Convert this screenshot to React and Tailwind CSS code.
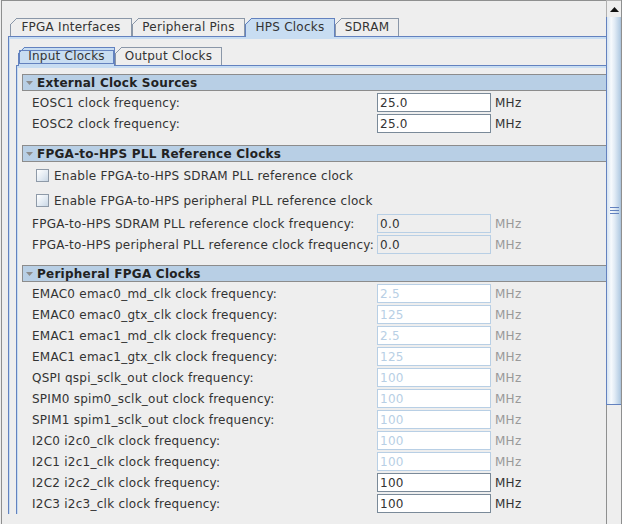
import React from "react";

const outerTabs = [
  { label: "FPGA Interfaces", w: "w-[122px]" },
  { label: "Peripheral Pins", w: "w-[113px]" },
  { label: "HPS Clocks", w: "w-[90px]", selected: true },
  { label: "SDRAM", w: "w-[64px]" },
];

const innerTabs = [
  { label: "Input Clocks", w: "w-[97px]", selected: true, focused: true },
  { label: "Output Clocks", w: "w-[107px]" },
];

const peripheral = [
  ["EMAC0 emac0_md_clk clock frequency:", "2.5", "off"],
  ["EMAC0 emac0_gtx_clk clock frequency:", "125", "off"],
  ["EMAC1 emac1_md_clk clock frequency:", "2.5", "off"],
  ["EMAC1 emac1_gtx_clk clock frequency:", "125", "off"],
  ["QSPI qspi_sclk_out clock frequency:", "100", "off"],
  ["SPIM0 spim0_sclk_out clock frequency:", "100", "off"],
  ["SPIM1 spim1_sclk_out clock frequency:", "100", "off"],
  ["I2C0 i2c0_clk clock frequency:", "100", "off"],
  ["I2C1 i2c1_clk clock frequency:", "100", "off"],
  ["I2C2 i2c2_clk clock frequency:", "100", "on"],
  ["I2C3 i2c3_clk clock frequency:", "100", "on"],
];

function Tab({ label, w, selected, focused }) {
  const line = selected ? "bg-[#6382bf]" : "bg-[#8a97a8]";
  return (
    <div className={`relative h-[19px] shrink-0 ${w} ${selected ? "" : "border-b border-[#6382bf]"}`}>
      {/* tab body with the cut corner */}
      <div
        className={`absolute inset-0 [clip-path:polygon(6px_0,100%_0,100%_100%,0_100%,0_6px)] ${
          selected ? "bg-[#c8ddf2]" : "bg-[#eeeeee]"
        }`}
      />
      <span className={`absolute left-[6px] right-0 top-0 h-px ${line}`} />
      <span className={`absolute bottom-0 right-0 top-0 w-px ${line}`} />
      <span className={`absolute bottom-0 left-0 top-[6px] w-px ${line}`} />
      <svg className="absolute left-0 top-0" width="7" height="7">
        <line x1="0.5" y1="6.5" x2="6.5" y2="0.5" stroke={selected ? "#6382bf" : "#8a97a8"} />
      </svg>
      {focused && <span className="absolute bottom-[2px] left-px right-px top-[3px] border border-[#6382bf]" />}
      <div className="relative flex h-full items-center justify-center whitespace-nowrap pb-px text-[#333]">
        {label}
      </div>
    </div>
  );
}

function TabRow({ tabs }) {
  return (
    <div className="flex h-[19px]">
      <div className="w-[2px] shrink-0 border-b border-[#6382bf]" />
      {tabs.map((t) => (
        <Tab key={t.label} {...t} />
      ))}
      <div className="flex-1 border-b border-[#6382bf]" />
    </div>
  );
}

function Header({ title }) {
  return (
    <div className="flex h-[17px] items-center border-y border-l border-[#8c8c8c] bg-[#b8cfe5] pl-[3px]">
      <svg width="7" height="4" className="shrink-0">
        <polygon points="0,0 7,0 3.5,4" fill="#8c8c8c" />
      </svg>
      <span className="ml-[4px] whitespace-nowrap font-bold text-[#222]">{title}</span>
    </div>
  );
}

function FieldRow({ label, value, kind }) {
  const box =
    kind === "on"
      ? "bg-white border-[#7a8a99] text-[#333]"
      : kind === "ro"
      ? "bg-[#eeeeee] border-[#b8cfe5] text-[#333]"
      : "bg-white border-[#b8cfe5] text-[#b8cfe5]";
  return (
    <div className="flex h-[21px] items-center pl-[10px]">
      <span className="w-[345px] shrink-0 whitespace-nowrap text-[#333]">{label}</span>
      <div className={`flex h-[19px] w-[114px] shrink-0 items-center border pl-[2px] ${box}`}>{value}</div>
      <span className={`ml-[4px] ${kind === "on" ? "text-[#333]" : "text-[#999]"}`}>MHz</span>
    </div>
  );
}

function CheckRow({ label }) {
  return (
    <div className="flex h-[25px] items-center pl-[14px]">
      <span className="h-[13px] w-[13px] shrink-0 border border-[#8e9aa8] bg-[linear-gradient(135deg,#ffffff,#e3ebf3_55%,#c9d7e5)]" />
      <span className="ml-[5px] whitespace-nowrap text-[#333]">{label}</span>
    </div>
  );
}

function Scrollbar() {
  return (
    <div className="flex h-full w-[16px] shrink-0 flex-col border-r border-[#8e8f8f]">
      <div className="flex h-[17px] shrink-0 items-center justify-center border-l border-t border-[#b0b0b0] bg-[#eeeeee]">
        <svg width="9" height="5">
          <polygon points="0,5 9,5 4.5,0" fill="#111" />
        </svg>
      </div>
      <div className="flex h-[388px] shrink-0 flex-col items-center justify-center gap-[2px] border-b border-l border-[#6382bf] bg-[linear-gradient(to_right,#d6e4f2,#f7fafd_30%,#e1ebf5_55%,#b8cfe5_90%,#a9bfd6)]">
        <span className="h-px w-[9px] bg-[#6382bf]" />
        <span className="h-px w-[9px] bg-[#6382bf]" />
        <span className="h-px w-[9px] bg-[#6382bf]" />
      </div>
      <div className="flex-1 border-l border-[#8e8f8f] bg-[#eeeeee]" />
    </div>
  );
}

export default function App() {
  return (
    <div className="flex h-[524px] w-[622px] overflow-hidden bg-[#eeeeee] pl-px font-['DejaVu_Sans',sans-serif] text-[12px] leading-none tracking-[0.25px]">
      {/* viewport */}
      <div className="h-full flex-1 overflow-hidden border-l border-t border-[#8e8f8f]">
        <div className="ml-[6px] mt-[17px] w-[660px]">
          <TabRow tabs={outerTabs} />
          <div className="border-l border-[#6382bf]">
            <div className="border-l border-t-2 border-[#c8ddf2] pl-[6px] pt-[8px]">
              <TabRow tabs={innerTabs} />
              <div className="border-l border-[#6382bf]">
                <div className="border-l border-t-2 border-[#c8ddf2] pl-[4px] pt-[6px]">
                  <div className="mb-[11px]">
                    <Header title="External Clock Sources" />
                    <div className="pt-px">
                      <FieldRow label="EOSC1 clock frequency:" value="25.0" kind="on" />
                      <FieldRow label="EOSC2 clock frequency:" value="25.0" kind="on" />
                    </div>
                  </div>
                  <div className="mb-[10px]">
                    <Header title="FPGA-to-HPS PLL Reference Clocks" />
                    <div className="pt-px">
                      <CheckRow label="Enable FPGA-to-HPS SDRAM PLL reference clock" />
                      <CheckRow label="Enable FPGA-to-HPS peripheral PLL reference clock" />
                      <FieldRow label="FPGA-to-HPS SDRAM PLL reference clock frequency:" value="0.0" kind="ro" />
                      <FieldRow label="FPGA-to-HPS peripheral PLL reference clock frequency:" value="0.0" kind="ro" />
                    </div>
                  </div>
                  <div>
                    <Header title="Peripheral FPGA Clocks" />
                    <div className="pt-px">
                      {peripheral.map(([label, value, kind]) => (
                        <FieldRow key={label} label={label} value={value} kind={kind} />
                      ))}
                    </div>
                  </div>
                </div>
              </div>
            </div>
          </div>
        </div>
      </div>
      <Scrollbar />
    </div>
  );
}
